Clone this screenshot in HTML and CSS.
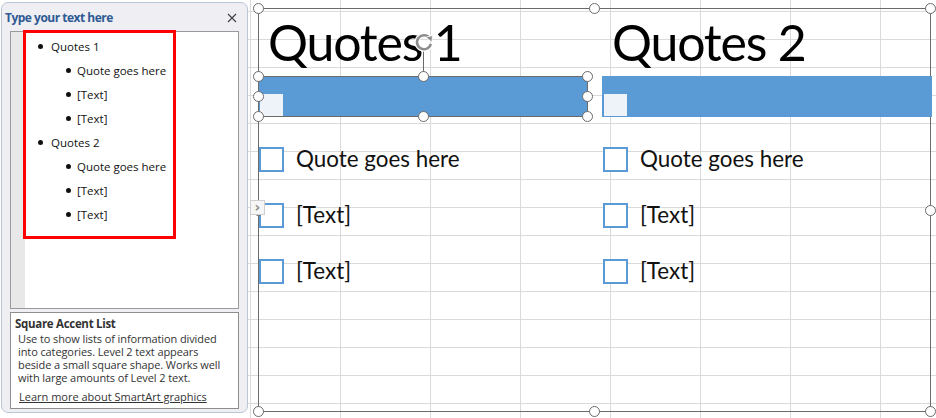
FILE: index.html
```html
<!DOCTYPE html>
<html lang="en">
<head>
    <meta charset="UTF-8">
    <title>SmartArt - Square Accent List</title>
    <link rel="stylesheet" href="styles.css">
</head>
<body>
    <div class="pane">
        <div class="pane-header">
            <span class="pane-title">Type your text here</span>
            <svg class="close" width="10" height="10" viewBox="0 0 10 10">
                <path d="M1 1 L9 9 M9 1 L1 9" stroke="#444" stroke-width="1.2"/>
            </svg>
        </div>
        <div class="outline">
            <ul class="bullets">
                <li class="l1">Quotes 1</li>
                <li class="l2">Quote goes here</li>
                <li class="l2">[Text]</li>
                <li class="l2">[Text]</li>
                <li class="l1">Quotes 2</li>
                <li class="l2">Quote goes here</li>
                <li class="l2">[Text]</li>
                <li class="l2">[Text]</li>
            </ul>
        </div>
        <div class="about">
            <div class="about-title">Square Accent List</div>
            <p class="about-text">Use to show lists of information divided into categories. Level 2 text appears beside a small square shape. Works well with large amounts of Level 2 text.</p>
            <a class="about-link" href="#">Learn more about SmartArt graphics</a>
        </div>
        <div class="highlight"></div>
    </div>

    <div class="sheet">
        <div class="frame">
            <div class="columns">
                <div class="col">
                    <div class="heading">Quotes 1</div>
                    <div class="bar selected">
                        <span class="accent"></span>
                        <span class="h tl"></span><span class="h tm"></span><span class="h tr"></span>
                        <span class="h ml"></span><span class="h mr"></span>
                        <span class="h bl"></span><span class="h bm"></span><span class="h br"></span>
                        <span class="stem"></span>
                        <svg class="rotate" width="22" height="22" viewBox="0 0 22 22">
                            <path d="M16.6 7 A7 7 0 1 0 17.8 13" fill="none" stroke="#fff" stroke-width="5"/>
                            <path d="M16.6 7 A7 7 0 1 0 17.8 13" fill="none" stroke="#8c8c8c" stroke-width="2.6"/>
                            <path d="M12.8 6.2 L19.6 4.6 L18.8 11 Z" fill="#8c8c8c" stroke="#fff" stroke-width="0.8"/>
                        </svg>
                    </div>
                    <ul class="items">
                        <li><span class="box"></span>Quote goes here</li>
                        <li><span class="box"></span>[Text]</li>
                        <li><span class="box"></span>[Text]</li>
                    </ul>
                </div>
                <div class="col">
                    <div class="heading">Quotes 2</div>
                    <div class="bar">
                        <span class="accent"></span>
                    </div>
                    <ul class="items">
                        <li><span class="box"></span>Quote goes here</li>
                        <li><span class="box"></span>[Text]</li>
                        <li><span class="box"></span>[Text]</li>
                    </ul>
                </div>
            </div>
            <span class="h f-tl"></span><span class="h f-tm"></span><span class="h f-tr"></span>
            <span class="h f-ml"></span><span class="h f-mr"></span>
            <span class="h f-bl"></span><span class="h f-bm"></span><span class="h f-br"></span>
        </div>
        <div class="expand">&#8250;</div>
    </div>
</body>
</html>
```

FILE: styles.css
```css
body {
    margin: 0;
    height: 418px;
    overflow: hidden;
    display: flex;
    background: #fff;
    font-family: "Open Sans", "Noto Sans", sans-serif;
}

/* text pane */
.pane {
    position: relative;
    box-sizing: border-box;
    width: 247px;
    height: 411px;
    margin: 2px 0 0 1px;
    padding: 0 8px;
    background: #eeeef3;
    border: 1px solid #b9c6d6;
    border-radius: 7px;
    display: flex;
    flex-direction: column;
}
.pane-header {
    height: 28px;
    display: flex;
    align-items: center;
    justify-content: space-between;
    margin-left: -5px;
    padding-right: 2px;
}
.pane-title {
    font-size: 12px;
    font-weight: bold;
    color: #2f5a94;
    letter-spacing: -0.5px;
}
.close {
    margin-top: 1px;
}
.outline {
    height: 278px;
    box-sizing: border-box;
    border: 1px solid #9a9a9a;
    background: linear-gradient(to right, #e8e8e8 14px, #fff 14px);
}
.bullets {
    list-style: none;
    margin: 2px 0 0;
    padding: 0;
}
.bullets li {
    height: 24px;
    display: flex;
    align-items: center;
    font-size: 11.5px;
    color: #111;
}
.bullets li::before {
    content: "";
    width: 5px;
    height: 5px;
    border-radius: 50%;
    background: #111;
}
.bullets .l1 {
    padding-left: 27px;
}
.bullets .l1::before {
    margin-right: 8px;
}
.bullets .l2 {
    padding-left: 55px;
}
.bullets .l2::before {
    margin-right: 6px;
}
.about {
    margin-top: 3px;
    height: 97px;
    box-sizing: border-box;
    border: 1px solid #8e8e8e;
    background: #fff;
    padding: 3px 4px 0;
    color: #333;
}
.about-title {
    font-size: 11.5px;
    font-weight: bold;
    letter-spacing: -0.3px;
    line-height: 16px;
}
.about-text {
    margin: 0 0 0 3px;
    font-size: 11px;
    line-height: 13px;
    letter-spacing: -0.1px;
}
.about-link {
    display: inline-block;
    margin: 2px 0 0 4px;
    font-size: 11px;
    color: #333;
}
.highlight {
    position: absolute;
    left: 21px;
    top: 27px;
    width: 153px;
    height: 209px;
    box-sizing: border-box;
    border: 3px solid #f00;
}

/* worksheet */
.sheet {
    position: relative;
    flex: 1;
    background-color: #fff;
    background-image:
        linear-gradient(to right, #dadada 1px, transparent 1px),
        linear-gradient(to bottom, #dadada 1px, transparent 1px);
    background-size: 90px 28px;
    background-position: 2px 11px;
}
.frame {
    position: absolute;
    left: 10px;
    top: 8px;
    width: 673px;
    height: 404px;
    box-sizing: border-box;
    border: 1px solid #6b6b6b;
}
.columns {
    display: flex;
    gap: 14px;
    margin-left: -1px;
}
.col {
    width: 330px;
    flex-shrink: 0;
}
.heading {
    height: 67px;
    box-sizing: border-box;
    padding: 0 0 0 10px;
    font-family: Lato, "Open Sans", sans-serif;
    font-size: 50px;
    letter-spacing: -1.2px;
    line-height: 66px;
    color: #000;
}
.bar {
    position: relative;
    height: 41px;
    box-sizing: border-box;
    background: #5b9bd5;
}
.bar.selected {
    border: 1px solid #6b6b6b;
}
.accent {
    position: absolute;
    left: 2px;
    bottom: 1px;
    width: 23px;
    height: 22px;
    background: #eef3fa;
}
.bar.selected .accent {
    left: 1px;
    bottom: 0;
}
.items {
    list-style: none;
    margin: 30px 0 0;
    padding: 0;
}
.items li {
    height: 56px;
    display: flex;
    align-items: flex-start;
    font-family: Lato, "Open Sans", sans-serif;
    font-size: 22.4px;
    line-height: 23px;
    color: #111;
}
.box {
    width: 25px;
    height: 25px;
    box-sizing: border-box;
    border: 2px solid #5b9bd5;
    background: #fff;
    margin: 0 12px 0 1px;
    flex-shrink: 0;
}

/* selection handles */
.h {
    position: absolute;
    width: 11px;
    height: 11px;
    box-sizing: border-box;
    border: 1.5px solid #6b6b6b;
    border-radius: 50%;
    background: #fff;
    z-index: 2;
}
.tl, .ml, .bl { left: -6px; }
.tm, .bm { left: 159px; }
.tr, .mr, .br { right: -6px; }
.tl, .tm, .tr { top: -6px; }
.ml, .mr { top: 14px; }
.bl, .bm, .br { bottom: -6px; }
.stem {
    position: absolute;
    left: 164px;
    top: -26px;
    width: 1px;
    height: 21px;
    background: #6b6b6b;
}
.rotate {
    position: absolute;
    left: 154px;
    top: -46px;
    z-index: 3;
}
.f-tl, .f-ml, .f-bl { left: -6px; }
.f-tm, .f-bm { left: 330px; }
.f-tr, .f-mr, .f-br { right: -6px; }
.f-tl, .f-tm, .f-tr { top: -6px; }
.f-ml, .f-mr { top: 196px; }
.f-bl, .f-bm, .f-br { bottom: -6px; }
.expand {
    position: absolute;
    left: 2px;
    top: 200px;
    width: 15px;
    height: 15px;
    box-sizing: border-box;
    border: 1px solid #cfcfcf;
    background: #f6f6f6;
    color: #8a8a8a;
    font-family: "DejaVu Sans", sans-serif;
    font-size: 14px;
    font-weight: bold;
    line-height: 12px;
    text-align: center;
    z-index: 4;
}
```
